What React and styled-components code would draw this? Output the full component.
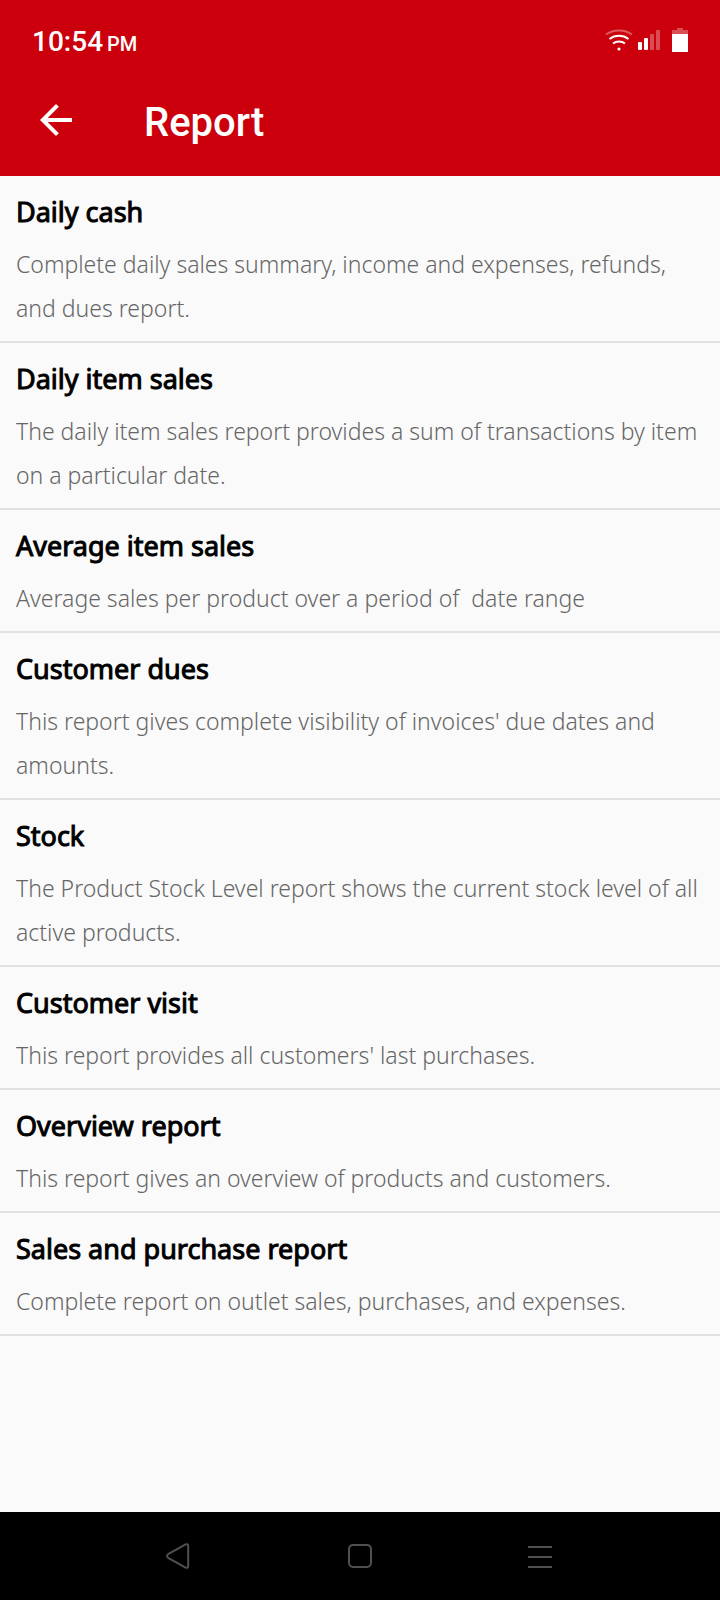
import React from "react";
import styled, { createGlobalStyle } from "styled-components";
import { MdArrowBack } from "react-icons/md";

const reports = [
  {
    title: "Daily cash",
    text: "Complete daily sales summary, income and expenses, refunds, and dues report.",
  },
  {
    title: "Daily item sales",
    text: "The daily item sales report provides a sum of transactions by item on a particular date.",
  },
  {
    title: "Average item sales",
    text: "Average sales per product over a period of  date range",
  },
  {
    title: "Customer dues",
    text: "This report gives complete visibility of invoices' due dates and amounts.",
  },
  {
    title: "Stock",
    text: "The Product Stock Level report shows the current stock level of all active products.",
  },
  {
    title: "Customer visit",
    text: "This report provides all customers' last purchases.",
  },
  {
    title: "Overview report",
    text: "This report gives an overview of products and customers.",
  },
  {
    title: "Sales and purchase report",
    text: "Complete report on outlet sales, purchases, and expenses.",
  },
];

const GlobalStyle = createGlobalStyle`
  * {
    box-sizing: border-box;
  }
  body {
    margin: 0;
    background: #fafafa;
    font-family: "Noto Sans", "Open Sans", sans-serif;
  }
`;

const Screen = styled.div`
  display: flex;
  flex-direction: column;
  min-height: 100vh;
`;

const Header = styled.header`
  padding-bottom: 16px;
  background: #cb000c;
  color: #fff;
  font-family: Roboto, sans-serif;
  font-weight: 500;
`;

const StatusBar = styled.div`
  display: flex;
  align-items: center;
  justify-content: space-between;
  height: 80px;
  padding: 0 32px;
`;

const Clock = styled.time`
  padding-top: 6px;
  font-size: 28px;
  line-height: 32px;
`;

const Meridiem = styled.span`
  margin-left: 4px;
  font-size: 20px;
`;

const StatusIcons = styled.div`
  display: flex;
  gap: 4px;
`;

const Toolbar = styled.div`
  display: flex;
  align-items: center;
  gap: 64px;
  height: 80px;
  padding: 0 32px;
`;

const IconButton = styled.button`
  display: flex;
  justify-content: center;
  padding: 0;
  border: 0;
  background: none;
  color: inherit;
  cursor: pointer;
`;

const PageTitle = styled.h1`
  margin: 0;
  padding-top: 6px;
  font-size: 40px;
  font-weight: 500;
  line-height: 48px;
`;

const ReportList = styled.ul`
  flex: 1;
  margin: 0;
  padding: 0;
  list-style: none;
`;

const ReportItem = styled.li`
  border-bottom: 2px solid #e1e1e1;
`;

const ReportLink = styled.a`
  display: block;
  padding: 12px 14px 11px 16px;
  color: #666;
  text-decoration: none;
`;

const ReportTitle = styled.h2`
  margin: 0 0 6px;
  color: #000;
  font-size: 27px;
  font-weight: 400;
  line-height: 48px;
  -webkit-text-stroke: 1px #000;
`;

const ReportText = styled.p`
  margin: 0;
  font-size: 23px;
  font-weight: 300;
  line-height: 44px;
  white-space: pre-wrap;
`;

const NavBar = styled.nav`
  display: grid;
  grid-template-columns: repeat(3, 1fr);
  align-items: center;
  height: 88px;
  padding: 0 12.5%;
  background: #000;
  color: #505050;
`;

function WifiIcon() {
  return (
    <svg width="30" height="24" fill="none" stroke="#fff" strokeWidth="2">
      <path d="M2 6.5C9 1 21 1 28 6.5" opacity=".35" />
      <path d="M5.5 11C11 6.7 19 6.7 24.5 11" />
      <path d="M9 15.5C12.5 12.8 17.5 12.8 21 15.5" />
      <circle cx="15" cy="21" r="1.6" fill="#fff" stroke="none" />
    </svg>
  );
}

function SignalIcon() {
  return (
    <svg width="30" height="24" fill="#fff">
      <rect x="0" y="14" width="4" height="8" rx="1" />
      <rect x="6" y="10" width="4" height="12" rx="1" />
      <rect x="12" y="6" width="4" height="16" rx="1" opacity=".3" />
      <rect x="18" y="2" width="4" height="20" rx="1" opacity=".3" />
    </svg>
  );
}

function BatteryIcon() {
  return (
    <svg width="16" height="24" fill="#fff">
      <path d="M5 0h6v2h5v4H0V2h5z" opacity=".3" />
      <path d="M0 6h16v18H0z" />
    </svg>
  );
}

export default function App() {
  return (
    <Screen>
      <GlobalStyle />
      <Header>
        <StatusBar>
          <Clock>
            10:54
            <Meridiem>PM</Meridiem>
          </Clock>
          <StatusIcons>
            <WifiIcon />
            <SignalIcon />
            <BatteryIcon />
          </StatusIcons>
        </StatusBar>
        <Toolbar>
          <IconButton aria-label="Back">
            <MdArrowBack size={48} />
          </IconButton>
          <PageTitle>Report</PageTitle>
        </Toolbar>
      </Header>

      <ReportList>
        {reports.map((report) => (
          <ReportItem key={report.title}>
            <ReportLink href="#">
              <ReportTitle>{report.title}</ReportTitle>
              <ReportText>{report.text}</ReportText>
            </ReportLink>
          </ReportItem>
        ))}
      </ReportList>

      <NavBar>
        <IconButton aria-label="Go back">
          <svg width="28" height="28" fill="none" stroke="currentColor" strokeWidth="2">
            <path d="M19.6 2.4L2.1 12.2Q-.1 14 2.1 15.8L19.6 25.6Q22.2 26.6 22.2 23.6V4.4Q22.2 1.4 19.6 2.4Z" />
          </svg>
        </IconButton>
        <IconButton aria-label="Home">
          <svg width="28" height="28" fill="none" stroke="currentColor" strokeWidth="2">
            <rect x="3" y="3" width="22" height="22" rx="4" />
          </svg>
        </IconButton>
        <IconButton aria-label="Menu">
          <svg width="28" height="28" stroke="currentColor" strokeWidth="2">
            <path d="M2 5H26M2 15H26M2 25H26" />
          </svg>
        </IconButton>
      </NavBar>
    </Screen>
  );
}
